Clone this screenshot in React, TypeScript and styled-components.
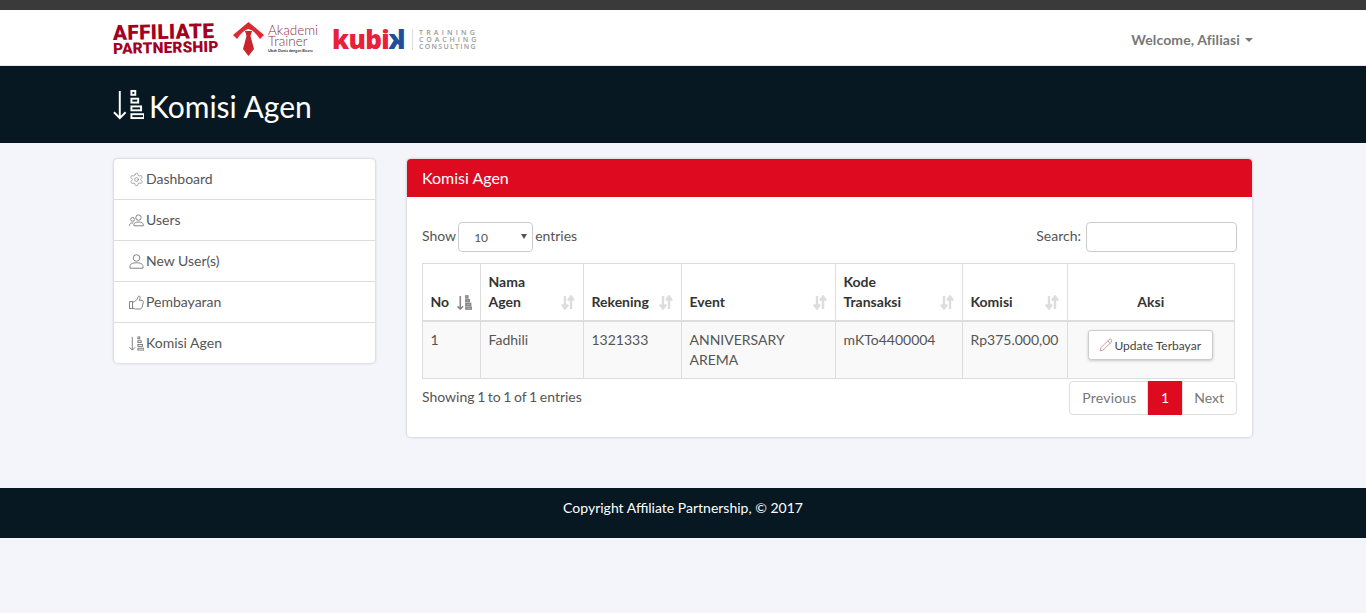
import React from 'react'
import styled, { createGlobalStyle } from 'styled-components'
import { Settings, Pencil } from 'lucide-react'

const GlobalStyle = createGlobalStyle`
    html, body { margin: 0; padding: 0; }
    body {
        background: #f4f5fa;
        color: #555;
        font-family: Lato, "Liberation Sans", sans-serif;
        font-size: 14px;
        line-height: 20px;
    }
    * { box-sizing: border-box; }
`

const TopStrip = styled.div`
    height: 10px;
    background: #3a3a3a;
`
const Container = styled.div`
    width: 1140px;
    margin: 0 auto;
`
const Navbar = styled.nav`
    height: 56px;
    background: #fff;
    border-bottom: 1px solid #e7e7e7;
`
const NavInner = styled(Container)`
    height: 100%;
    display: flex;
    align-items: center;
    justify-content: space-between;
`
const Logos = styled.div`
    display: flex;
    align-items: center;
    padding-top: 3px;
`
const AffiliateLogo = styled.div`
    width: 120px;
    padding-top: 2px;
    color: #a4001f;
    font-family: Roboto, "Liberation Sans", sans-serif;
    font-weight: 900;
    transform: rotate(-1.2deg);
    transform-origin: left center;
`
const AffiliateTop = styled.div`
    font-size: 20.8px;
    height: 18px;
    line-height: 18px;
    letter-spacing: 0.3px;
`
const AffiliateBottom = styled.div`
    font-size: 15.4px;
    height: 15px;
    line-height: 15px;
    letter-spacing: 0.2px;
`
const AkademiText = styled.div`
    width: 64px;
    margin-left: 4px;
    color: #8f2f3a;
    font-size: 13.5px;
    line-height: 11px;
    font-weight: 300;
`
const AkademiTag = styled.div`
    color: #333;
    font-size: 3.8px;
    font-weight: 700;
    line-height: 7px;
    white-space: nowrap;
`
const Kubix = styled.div`
    display: flex;
    align-items: center;
    width: 80px;
    color: #e8203a;
    font-family: "Open Sans", sans-serif;
    font-size: 26px;
    font-weight: 800;
    line-height: 26px;
    letter-spacing: -0.7px;
`
const KubixK = styled.span`
    display: inline-block;
    color: #1f4f9c;
    transform: scaleX(-1);
`
const Tagline = styled.div`
    border-left: 1px solid #ddd;
    padding-left: 6px;
    color: #999;
    font-family: "Open Sans", sans-serif;
    font-size: 7px;
    font-weight: 600;
    line-height: 7px;
    letter-spacing: 3.2px;
`
const TaglineMiddle = styled.div`
    letter-spacing: 2.9px;
`
const TaglineLast = styled.div`
    letter-spacing: 1.3px;
`
const Welcome = styled.div`
    display: flex;
    align-items: center;
    gap: 5px;
    padding-top: 4px;
    color: #777;
    font-weight: 700;
    letter-spacing: 0.12px;
`
const Caret = styled.span`
    width: 0;
    height: 0;
    border-top: 4px solid #777;
    border-left: 4px solid transparent;
    border-right: 4px solid transparent;
`
const PageHeader = styled.header`
    height: 77px;
    background: #081822;
    color: #fff;
`
const HeaderInner = styled(Container)`
    height: 100%;
    display: flex;
    align-items: center;
    gap: 5px;
`
const HeaderTitle = styled.h1`
    margin: 0;
    padding-top: 2px;
    font-size: 30px;
    font-weight: 400;
    line-height: 36px;
`
const Content = styled(Container)`
    display: flex;
    align-items: flex-start;
    gap: 32px;
    padding: 16px 1px 51px;
`
const SideMenu = styled.div`
    flex: 0 0 261px;
    background: #fff;
    border-radius: 4px;
    box-shadow: 0 0 3px rgba(0, 0, 0, 0.25);
`
const SideItem = styled.a`
    display: flex;
    align-items: center;
    gap: 2px;
    height: 41px;
    padding: 0 15px;
    color: #555;
    border-top: 1px solid #ddd;
    &:first-child { border-top: 0; height: 40px; }
    svg { color: #777; flex: none; }
`
const Panel = styled.section`
    flex: 1;
    height: 278px;
    background: #fff;
    border-radius: 4px;
    box-shadow: 0 0 3px rgba(0, 0, 0, 0.25);
    overflow: hidden;
`
const PanelHead = styled.div`
    height: 38px;
    padding: 0 15px;
    background: #dd0a20;
    color: #fff;
    font-size: 16px;
    line-height: 38px;
`
const PanelBody = styled.div`
    padding: 25px 15px 0;
`
const FilterRow = styled.div`
    display: flex;
    justify-content: space-between;
    align-items: center;
    height: 30px;
`
const FilterLabel = styled.label`
    display: flex;
    align-items: center;
    gap: 2px;
`
const FilterText = styled.span`
    padding-bottom: 2px;
`
const FakeSelect = styled.div`
    display: flex;
    align-items: center;
    justify-content: space-between;
    width: 75px;
    height: 30px;
    padding: 2px 5px 0 15px;
    border: 1px solid #ccc;
    border-radius: 4px;
    background: #fff;
    font-size: 12px;
`
const SelectArrow = styled.span`
    width: 0;
    height: 0;
    margin-top: -3px;
    border-top: 5px solid #555;
    border-left: 3.5px solid transparent;
    border-right: 3.5px solid transparent;
`
const SearchBox = styled.input`
    width: 151px;
    height: 30px;
    margin-left: 3px;
    border: 1px solid #ccc;
    border-radius: 4px;
    background: #fff;
`
const Table = styled.table`
    width: 813px;
    margin-top: 11px;
    border-collapse: collapse;
    table-layout: fixed;
`
const Th = styled.th<{ $center?: boolean }>`
    position: relative;
    padding: 8px 8px 8px 7.5px;
    border: 1px solid #ddd;
    border-bottom-width: 2px;
    color: #333;
    font-weight: 700;
    text-align: ${p => (p.$center ? 'center' : 'left')};
    vertical-align: bottom;
`
const SortSlot = styled.span`
    position: absolute;
    right: 8px;
    bottom: 10px;
    display: flex;
`
const Td = styled.td`
    height: 57px;
    padding: 8px 8px 8px 7.5px;
    border: 1px solid #ddd;
    background: #f9f9f9;
    vertical-align: top;
`
const ActionCell = styled(Td)`
    padding-bottom: 0;
    text-align: center;
`
const UpdateButton = styled.button`
    display: inline-flex;
    align-items: center;
    gap: 1px;
    height: 30px;
    padding: 0 11px 0 10px;
    border: 1px solid #ccc;
    border-radius: 3px;
    background: #fff;
    box-shadow: 0 1px 3px rgba(0, 0, 0, 0.2);
    color: #444;
    font-family: inherit;
    font-size: 12px;
    vertical-align: top;
    svg { color: #a35a60; }
`
const TableFoot = styled.div`
    display: flex;
    justify-content: space-between;
    align-items: flex-start;
    margin-top: 2px;
`
const Info = styled.div`
    padding-top: 6px;
    word-spacing: -1px;
`
const Pager = styled.div`
    display: flex;
    height: 34px;
`
const PageLink = styled.a<{ $active?: boolean }>`
    padding: 0 12px;
    line-height: 32px;
    color: ${p => (p.$active ? '#fff' : '#777')};
    background: ${p => (p.$active ? '#dd0a20' : '#fff')};
    border: 1px solid ${p => (p.$active ? '#dd0a20' : '#ddd')};
    &:first-child {
        padding-right: 10.5px;
        border-radius: 4px 0 0 4px;
        letter-spacing: 0.2px;
    }
    &:last-child {
        padding-left: 11px;
        border-radius: 0 4px 4px 0;
    }
`
const Footer = styled.footer`
    height: 50px;
    background: #081822;
    color: #fff;
    text-align: center;
    line-height: 40px;
`

function TieLogo() {
    return (
        <svg width="31" height="34" viewBox="0 0 31 34">
            <path d="M15.5 0 L31 13 L27 17 Q21 8 15.5 7 Q10 8 4 17 L0 13 Z" fill="#dd2a32" />
            <path d="M12 9 L19 9 L17.5 14 L21 27 L15.5 34 L10 27 L13.5 14 Z" fill="#c9252c" />
        </svg>
    )
}

function UserIcon() {
    return (
        <svg width="15" height="15" viewBox="0 0 15 15" fill="none" stroke="currentColor" strokeWidth="0.9">
            <circle cx="7.5" cy="4" r="3.3" />
            <path d="M1 14.2 V12.4 C1 10 3.5 8.8 7.5 8.8 C11.5 8.8 14 10 14 12.4 V14.2 Z" />
        </svg>
    )
}

function UsersIcon() {
    return (
        <svg width="15" height="15" viewBox="0 0 15 15" fill="none" stroke="currentColor" strokeWidth="0.9">
            <circle cx="9.5" cy="4.6" r="2.7" />
            <path d="M5 12.8 V11.6 C5 9.9 7 9 9.5 9 C12 9 14.3 9.9 14.3 11.6 V12.8 Z" />
            <circle cx="3.6" cy="6.4" r="1.9" />
            <path d="M0.6 12.8 V11.8 C0.6 10.5 2 9.8 4.4 9.9" />
        </svg>
    )
}

function ThumbIcon() {
    return (
        <svg width="15" height="15" viewBox="0 0 15 15" fill="none" stroke="currentColor" strokeWidth="0.9">
            <rect x="0.6" y="6.6" width="3" height="7" />
            <path d="M3.6 7.4 C6 6.8 7.8 5 8.6 3 C9 1.6 9.6 0.8 10.4 1 C11.4 1.3 11.2 3.4 10.4 5.4 H13 C14.2 5.4 14.6 6.6 14.2 7.8 L13 12.4 C12.7 13.4 12 14 11 14 H6.6 C5.6 14 4.6 13.4 3.6 13" />
        </svg>
    )
}

// arrow going down next to the stacked bars, same icon in header, menu and table
function SortAmount({ size = 16, color = 'currentColor', weight = 1.8 }: { size?: number; color?: string; weight?: number }) {
    return (
        <svg width={size} height={size} viewBox="0 0 32 32" fill="none" stroke={color} strokeWidth={weight}>
            <path d="M7 2 V30 M1 24 L7 30 L13 24" />
            <rect x="19" y="2" width="4" height="4" />
            <rect x="19" y="10" width="7" height="4" />
            <rect x="19" y="18" width="10" height="4" />
            <rect x="19" y="26" width="13" height="4" />
        </svg>
    )
}

function SortBoth() {
    return (
        <svg width="14" height="15" viewBox="0 0 14 15" fill="none" stroke="#ddd" strokeWidth="2.4">
            <path d="M4 1 V13 M1 9.5 L4 13.5 L7 9.5" />
            <path d="M10 14 V2 M7 5.5 L10 1.5 L13 5.5" />
        </svg>
    )
}

const menu = [
    { label: 'Dashboard', icon: <Settings size={15} strokeWidth={1} /> },
    { label: 'Users', icon: <UsersIcon /> },
    { label: 'New User(s)', icon: <UserIcon /> },
    { label: 'Pembayaran', icon: <ThumbIcon /> },
    { label: 'Komisi Agen', icon: <SortAmount size={15} weight={2} /> },
]

const columns = [
    { first: 'No', width: 58 },
    { first: 'Nama', second: 'Agen', width: 103 },
    { first: 'Rekening', width: 98 },
    { first: 'Event', width: 154 },
    { first: 'Kode', second: 'Transaksi', width: 127 },
    { first: 'Komisi', width: 105 },
]

export default function App() {
    return (
        <>
            <GlobalStyle />
            <TopStrip />
            <Navbar>
                <NavInner>
                    <Logos>
                        <AffiliateLogo>
                            <AffiliateTop>AFFILIATE</AffiliateTop>
                            <AffiliateBottom>PARTNERSHIP</AffiliateBottom>
                        </AffiliateLogo>
                        <TieLogo />
                        <AkademiText>
                            <div>Akademi</div>
                            <div>Trainer</div>
                            <AkademiTag>Ubah Dunia dengan Bicara</AkademiTag>
                        </AkademiText>
                        <Kubix>kubi<KubixK>k</KubixK></Kubix>
                        <Tagline>
                            <div>TRAINING</div>
                            <TaglineMiddle>COACHING</TaglineMiddle>
                            <TaglineLast>CONSULTING</TaglineLast>
                        </Tagline>
                    </Logos>
                    <Welcome>Welcome, Afiliasi <Caret /></Welcome>
                </NavInner>
            </Navbar>
            <PageHeader>
                <HeaderInner>
                    <SortAmount size={31} weight={2} />
                    <HeaderTitle>Komisi Agen</HeaderTitle>
                </HeaderInner>
            </PageHeader>
            <Content>
                <SideMenu>
                    {menu.map(item => (
                        <SideItem key={item.label}>{item.icon}{item.label}</SideItem>
                    ))}
                </SideMenu>
                <Panel>
                    <PanelHead>Komisi Agen</PanelHead>
                    <PanelBody>
                        <FilterRow>
                            <FilterLabel>
                                <FilterText>Show</FilterText>
                                <FakeSelect>10<SelectArrow /></FakeSelect>
                                <FilterText>entries</FilterText>
                            </FilterLabel>
                            <FilterLabel>
                                <FilterText>Search:</FilterText>
                                <SearchBox />
                            </FilterLabel>
                        </FilterRow>
                        <Table>
                            <colgroup>
                                {columns.map(c => <col key={c.first} style={{ width: c.width }} />)}
                                <col />
                            </colgroup>
                            <thead>
                                <tr>
                                    {columns.map((c, i) => (
                                        <Th key={c.first}>
                                            {c.first}
                                            {c.second && <><br />{c.second}</>}
                                            <SortSlot>
                                                {i === 0 ? <SortAmount size={15} color="#888" weight={3.4} /> : <SortBoth />}
                                            </SortSlot>
                                        </Th>
                                    ))}
                                    <Th $center>Aksi</Th>
                                </tr>
                            </thead>
                            <tbody>
                                <tr>
                                    <Td>1</Td>
                                    <Td>Fadhili</Td>
                                    <Td>1321333</Td>
                                    <Td>ANNIVERSARY AREMA</Td>
                                    <Td>mKTo4400004</Td>
                                    <Td>Rp375.000,00</Td>
                                    <ActionCell>
                                        <UpdateButton><Pencil size={14} strokeWidth={1} />Update Terbayar</UpdateButton>
                                    </ActionCell>
                                </tr>
                            </tbody>
                        </Table>
                        <TableFoot>
                            <Info>Showing 1 to 1 of 1 entries</Info>
                            <Pager>
                                <PageLink>Previous</PageLink>
                                <PageLink $active>1</PageLink>
                                <PageLink>Next</PageLink>
                            </Pager>
                        </TableFoot>
                    </PanelBody>
                </Panel>
            </Content>
            <Footer>Copyright Affiliate Partnership, © 2017</Footer>
        </>
    )
}
